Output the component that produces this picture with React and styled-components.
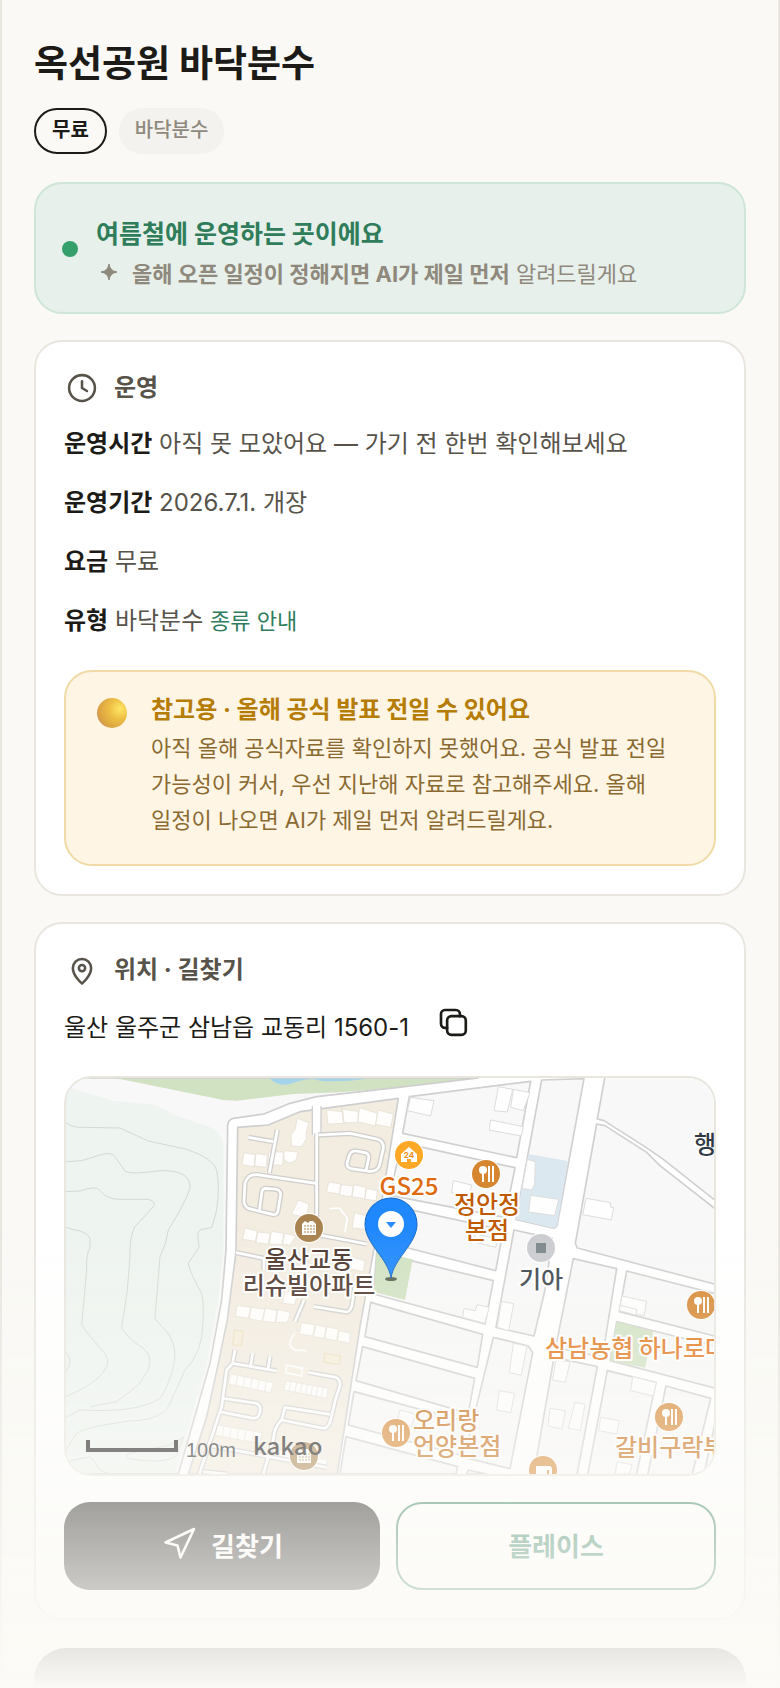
import React from "react";
import styled, { createGlobalStyle } from "styled-components";

const GlobalStyle = createGlobalStyle`
  * {
    box-sizing: border-box;
  }
  body {
    margin: 0;
    background: #faf9f5;
    color: #1c1b18;
    font-family: Inter, "Noto Sans CJK KR", sans-serif;
    word-break: keep-all;
  }
`;

const Page = styled.div`
  height: 100vh;
  overflow: hidden;
  padding: 36px 32px;
  border: solid #e8e6df;
  border-width: 0 2px;
  background: #faf9f5;
`;

const Title = styled.h1`
  margin: 0 0 16px;
  font-size: 37px;
  line-height: 56px;
  font-weight: 700;
`;

const Chips = styled.div`
  display: flex;
  gap: 12px;
`;

const Chip = styled.span`
  height: 46px;
  padding: ${(props) => (props.$active ? "4px 16px" : "4px 14px")};
  border: 2px solid ${(props) => (props.$active ? "#1c1b18" : "#f3f2ee")};
  border-radius: 23px;
  background: ${(props) => (props.$active ? "#faf9f5" : "#f3f2ee")};
  color: ${(props) => (props.$active ? "#1c1b18" : "#8f897d")};
  font-size: 20px;
  line-height: 32px;
  font-weight: ${(props) => (props.$active ? 700 : 500)};
`;

const Status = styled.section`
  display: flex;
  align-items: center;
  gap: 18px;
  margin-top: 28px;
  padding: 20px 24px 18px;
  border: 2px solid #cfe5d8;
  border-radius: 28px;
  background: #e7f0ea;
`;

const Dot = styled.span`
  flex: none;
  width: 16px;
  height: 16px;
  margin-left: 2px;
  border-radius: 50%;
  background: #35a06c;
`;

const StatusBody = styled.div`
  padding-top: 10px;
`;

const StatusTitle = styled.h2`
  margin: 0;
  color: #2f7d5b;
  font-size: 25px;
  line-height: 40px;
  font-weight: 700;
`;

const StatusNote = styled.p`
  display: flex;
  align-items: center;
  gap: 10px;
  margin: 0;
  color: #8f897d;
  font-size: 22px;
  line-height: 40px;

  svg {
    flex: none;
    margin-bottom: 4px;
  }
`;

const Card = styled.section`
  margin-top: 26px;
  padding: 28px;
  border: 2px solid #e8e6df;
  border-radius: 28px;
  background: #fff;
`;

const CardHeader = styled.header`
  display: flex;
  align-items: center;
  gap: 14px;
  height: 36px;
  margin-bottom: 18px;
  color: #57534a;
`;

const CardTitle = styled.h2`
  margin: 0;
  font-size: 24px;
  line-height: 34px;
  font-weight: 700;
`;

const InfoList = styled.div`
  display: flex;
  flex-direction: column;
  gap: 20px;
`;

const InfoRow = styled.div`
  color: #57534a;
  font-size: 24px;
  line-height: 39px;

  strong {
    color: #1c1b18;
    font-weight: 700;
  }
`;

const GuideLink = styled.a`
  color: #2f7d5b;
  font-size: 22px;
  line-height: 1;
  text-decoration: none;
`;

const Notice = styled.div`
  display: flex;
  align-items: flex-start;
  gap: 24px;
  margin-top: 30px;
  padding: 22px 24px 26px 31px;
  border: 2px solid #f0dba6;
  border-radius: 28px;
  background: #fff5e5;

  svg {
    flex: none;
    margin-top: 4px;
  }
`;

const NoticeTitle = styled.h3`
  margin: 0 0 4px;
  color: #b57c06;
  font-size: 24px;
  line-height: 32px;
  font-weight: 700;
`;

const NoticeText = styled.p`
  margin: 0;
  color: #8a6a30;
  font-size: 22px;
  line-height: 36px;
`;

const Address = styled.div`
  display: flex;
  align-items: center;
  gap: 28px;
  margin-bottom: 26px;
  font-size: 24px;
  line-height: 44px;
`;

const CopyButton = styled.button`
  display: flex;
  padding: 0 0 12px;
  border: 0;
  background: none;
  color: #1c1b18;
`;

const MapFrame = styled.div`
  height: 400px;
  overflow: hidden;
  border: 2px solid #e8e6df;
  border-radius: 28px;

  svg {
    display: block;
    width: 100%;
    height: 100%;
  }
`;

const MapText = styled.text`
  fill: ${(props) => props.$color};
  stroke: #fff;
  stroke-width: 4px;
  stroke-linejoin: round;
  paint-order: stroke;
  font-family: "Noto Sans CJK KR", sans-serif;
  font-size: 24px;
  font-weight: 500;
`;

const Logo = styled.text`
  fill: #111;
  font-family: "Noto Sans CJK KR", sans-serif;
  font-size: 24px;
  font-weight: 500;
`;

const ScaleText = styled.text`
  fill: #222;
  font-family: "Liberation Sans", sans-serif;
  font-size: 20px;
`;

const Actions = styled.div`
  display: flex;
  gap: 16px;
  margin-top: 26px;
`;

const Action = styled.button`
  display: flex;
  flex: 1;
  align-items: center;
  justify-content: center;
  gap: 14px;
  height: 88px;
  padding: 0 0 4px;
  border: ${(props) => (props.$outline ? "2px solid #2f7d5b" : "0")};
  border-radius: 26px;
  background: ${(props) => (props.$outline ? "#fff" : "#1c1b18")};
  color: ${(props) => (props.$outline ? "#2f7d5b" : "#fff")};
  font-family: inherit;
  font-size: 26px;
  font-weight: 700;
`;

const DarkCard = styled.section`
  height: 240px;
  margin-top: 28px;
  border-radius: 32px;
  background: #1c1b18;
`;

const BottomFade = styled.div`
  position: fixed;
  right: 0;
  bottom: 0;
  left: 0;
  height: 464px;
  background: linear-gradient(rgba(251, 250, 246, 0), #fbfaf6);
  pointer-events: none;
`;

const Icon = ({ size = 36, stroke = 1.7, children }) => (
  <svg
    width={size}
    height={size}
    viewBox="0 0 24 24"
    fill="none"
    stroke="currentColor"
    strokeWidth={stroke}
    strokeLinecap="round"
    strokeLinejoin="round"
    aria-hidden="true"
  >
    {children}
  </svg>
);

const northArea =
  "M18 24H1255L990 55 770 80 690 100 612 132 520 145Q505 148 503 165L498 540 485 690 450 880 355 1212H18Z";

const estate =
  "M533 172L625 165 720 125 1015 85 945 520 900 770 832 1212H385L440 1040 475 880 502 750 528 545Z";

const contours = [
  "M18 158Q40 174 70 172L180 174 265 213 380 238Q460 265 470 300Q480 350 470 420L456 472 420 480Q408 490 418 530L385 580Q390 610 425 670Q435 720 425 800Q415 860 375 900L330 1000Q310 1050 210 1053Q80 1070 50 1090L18 1140",
  "M18 275L65 272 130 252Q155 247 165 260L195 303Q210 315 300 302Q395 300 390 355Q375 400 325 480Q320 520 300 560L285 745Q295 760 325 790Q355 840 340 890Q325 950 300 985Q250 1020 130 1022L60 1020 18 1042",
  "M18 365L60 363Q110 345 120 362Q140 388 180 388L265 388Q290 395 280 410L225 470Q208 500 210 560L202 660 185 775Q215 815 250 835Q280 860 265 900L235 945 170 995 90 1010",
  "M18 472L45 480Q80 485 90 505V535Q78 550 80 600L65 765Q90 800 130 845Q150 870 140 890Q120 930 60 960L18 980",
  "M18 848Q42 870 18 905",
  "M370 1102L350 1155Q320 1185 200 1165 195 1150 220 1148L330 1125Z",
  "M18 1175L90 1160Q110 1180 120 1200L150 1212",
];

// coordinates are relative to the eastern half of the map
const blocks = [
  "58,80 422,34 380,263 38,190",
  "34,218 375,293 345,442 0,376",
  "55,418 340,480 317,602 20,525",
  "-40,547 310,632 285,762 -50,672",
  "372,480 487,505 465,660 432,798 318,772",
  "-58,697 278,793 262,892 -75,800",
  "-82,830 254,925 235,1030 -102,932",
  "-108,965 228,1055 208,1155 -125,1065",
  "-132,1100 203,1190 198,1212 -150,1212",
  "310,802 415,828 428,848 360,1196 222,1162",
  "235,1200 290,1212 230,1212",
  "550,566 680,596 637,862 497,832",
  "710,603 980,672 980,800 688,725",
  "620,162 645,167 770,247 810,287 980,420 980,644 562,534 556,520",
  "645,20 980,20 980,395 820,268 768,232 642,152 622,147",
  "680,755 980,830 980,956 660,872",
  "652,902 798,938 738,1220 592,1220",
  "828,948 962,985 905,1220 772,1220",
  "492,862 622,890 560,1220 430,1220",
  "975,1060 980,1220 940,1220",
];

const houses = [
  "62,82 132,92 122,138 52,122",
  "325,50 368,58 352,126 312,122",
  "370,58 420,68 400,122 362,112",
  "302,150 400,170 394,198 298,180",
  "190,332 245,345 238,378 185,368",
  "422,376 506,388 494,437 416,426",
  "412,268 436,275 434,345 424,360 396,355",
  "588,385 662,398 662,412 671,412 664,450 578,434",
  "695,678 770,694 762,738 690,720",
  "690,706 740,718 738,735 688,722",
  "334,694 371,701 356,782 322,772",
  "222,715 255,722 262,704 298,712 284,760 218,742",
  "370,820 411,828 394,916 358,908",
  "328,962 374,970 362,1028 320,1020",
  "498,870 540,875 526,937 488,930",
  "480,1015 526,1022 516,1077 474,1068",
  "555,996 585,1004 571,1082 535,1074 542,1048",
  "632,1042 688,1052 680,1092 626,1082",
  "728,920 799,938 790,978 722,962",
  "682,1176 726,1184 718,1212 675,1212",
  "255,492 322,506 318,532 252,516",
  "30,1020 75,1032 65,1070 20,1060",
];

const flats = [
  "800,120 845,125 845,112 850,160 804,162",
  "848,118 895,124 893,158 852,158",
  "898,113 952,130 946,168 894,155",
  "955,120 1000,132 992,172 947,163",
  "712,145 746,158 738,190 740,205 724,230 695,228 693,195 705,180",
  "552,248 586,254 582,290 546,284",
  "588,250 622,256 618,292 584,288",
  "626,246 670,246 668,286 624,284",
  "672,242 714,246 708,270 690,280 672,270",
  "806,336 842,342 838,372 800,366",
  "844,344 880,348 875,380 838,375",
  "882,344 918,352 914,386 876,380",
  "920,355 952,362 948,392 914,388",
  "715,390 746,402 742,432 726,440 695,432",
  "555,474 592,484 586,514 548,508",
  "594,486 630,490 625,522 588,518",
  "634,484 672,490 666,524 628,522",
  "674,490 708,498 690,526 668,522",
  "884,428 925,440 918,478 876,474",
  "870,560 915,572 910,606 866,595",
  "675,662 712,672 704,704 668,700",
  "532,706 572,712 565,745 526,738",
  "574,712 614,718 606,754 568,746",
  "616,714 652,722 644,758 608,754",
  "654,718 692,728 682,756 648,758",
  "724,758 766,764 758,798 718,792",
  "768,764 798,772 792,805 760,800",
  "800,770 836,778 830,812 795,806",
  "838,782 872,790 868,820 832,812",
  "512,912 640,938 632,968 506,942",
  "678,932 804,955 800,985 672,960",
  "472,1065 606,1088 598,1120 466,1096",
  "660,1140 802,1170 796,1200 655,1176",
];

const lanes = [
  "M770 190V495",
  "M775 195L870 190 950 207Q972 212 970 235L958 288Q950 306 928 304L872 296Q858 290 862 276L868 256Q873 242 888 243L915 248Q928 251 926 265L918 302",
  "M565 202L640 215M652 180L628 308",
  "M768 340L590 314Q565 312 555 338L552 395Q555 412 568 416L640 434Q652 434 654 422L662 372Q660 358 642 357L615 355Q606 356 605 370L598 422",
  "M528 548L612 565V600",
  "M740 488L920 522",
  "M762 710L860 726Q872 724 876 705L886 640",
  "M705 755L732 690",
  "M525 840L518 880 500 900 485 1010 418 1212",
  "M518 880L650 903M578 850L572 888M630 858L624 896",
  "M745 907L828 922Q842 930 840 947L826 990 812 1050Q806 1075 790 1075L665 1050Q642 1070 640 1110L610 1212",
  "M665 1050L675 1012 810 1033",
  "M490 985L590 1000Q604 1008 600 1025 596 1045 580 1045L478 1025",
  "M455 1128L800 1192M430 1205L500 1212",
];

const Badge = ({ x, y, color = "#d68630", children }) => (
  <g transform={`translate(${x} ${y})`}>
    <circle r="15" fill="#fff" />
    <circle r="14" fill={color} />
    {children}
  </g>
);

const Food = (props) => (
  <Badge {...props}>
    <circle cx="-3" cy="-4" r="4" fill="#fff" />
    <path d="M-3-1V8M3-8V8M7-8V8" stroke="#fff" strokeWidth="2" />
  </Badge>
);

const Apartment = (props) => (
  <Badge {...props} color="#a9834f">
    <path d="M-7 7V-4l3-3 3 2 2-2 3 0 3 3V7z" fill="#fff" />
    <path
      d="M-5-2H6M-5 1H6M-5 4H6"
      stroke="#a9834f"
      strokeDasharray="2 1"
      strokeWidth="1"
    />
  </Badge>
);

const PlaceMap = () => (
  <svg
    viewBox="0 0 648 396"
    preserveAspectRatio="xMidYMid slice"
    role="img"
    aria-label="옥선공원 바닥분수 지도"
  >
    <defs>
      <clipPath id="north">
        <path d={northArea} />
      </clipPath>
    </defs>
    <rect width="648" height="396" fill="#fff" />
    <g transform="translate(-6 -8) scale(0.33333)" strokeLinejoin="round">
      <path d={northArea} fill="#f8f8f8" />
      <g clipPath="url(#north)">
        <path
          d="M0 45L160 92 285 105 350 137 440 167Q485 185 490 220V540L475 690 440 880 345 1212H0Z"
          fill="#eef4f0"
        />
        <path
          d="M165 24L490 90 530 92 700 72 840 67 990 55H1255V24Z"
          fill="#d1e2c2"
        />
        <path d="M628 24Q652 50 690 42 745 20 780 32 850 38 930 24Z" fill="#a3d4ec" />
      </g>
      <path d={northArea} fill="none" stroke="#cfcfcf" strokeWidth="5" />
      <path d="M18 60V1224" stroke="#eef4f0" strokeWidth="8" />
      <g fill="none" stroke="#d4d9d1" strokeWidth="3">
        {contours.map((d) => (
          <path key={d} d={d} />
        ))}
      </g>

      <path d={estate} fill="#f3ece1" stroke="#cfcfcf" strokeWidth="5" />
      <path d="M770 108V195" stroke="#cfcfcf" strokeWidth="30" />
      <path d="M770 90V196" stroke="#fff" strokeWidth="22" />
      <g fill="#fffefc" stroke="#e3ddd2" strokeWidth="2">
        {flats.map((points) => (
          <polygon key={points} points={points} />
        ))}
      </g>
      <g stroke="#e3ddd2" strokeWidth="2">
        <path d="M533 917l-6 30M555 920l-6 30M577 925l-6 30M598 929l-6 30M619 934l-6 30" />
        <path d="M693 935l-6 30M710 938l-6 30M726 941l-6 30M742 944l-6 30M758 947l-6 30M774 950l-6 30M790 953l-6 30" />
        <path d="M492 1070l-6 30M514 1074l-6 30M536 1077l-6 30M558 1080l-6 30M582 1084l-6 30" />
      </g>
      <g fill="none">
        {lanes.map((d) => (
          <path key={d} d={d} stroke="#d0cfcd" strokeWidth="16" />
        ))}
        {lanes.map((d) => (
          <path key={d} d={d} stroke="#fff" strokeWidth="8" />
        ))}
        <path
          d="M808 416L838 414 862 445 855 486M705 790Q675 825 705 840L740 842M680 885L728 895 724 918 678 908Z"
          stroke="#fff"
          strokeWidth="5"
        />
        <path
          d="M524 780L550 785 544 828 518 824ZM795 850L842 858 838 884 790 876Z"
          fill="#f4edd8"
          stroke="#ece0c0"
          strokeWidth="4"
        />
      </g>

      <g transform="translate(990 0)">
        <g fill="#f8f8f8" stroke="#d0d0d0" strokeWidth="5">
          <path d="M455 30L582 26 502 462Q498 477 484 473L378 448Z" />
          {blocks.map((points) => (
            <polygon key={points} points={points} />
          ))}
        </g>
        <path d="M415 252L534 273 502 462Q498 477 484 473L378 448Z" fill="#dce8f0" />
        <path d="M-40 545L68 568 45 690-48 666Z" fill="#d1e2c2" />
        <path d="M680 755L790 785 765 893 660 872Z" fill="#d1e2c2" />
        <g fill="#fefefe" stroke="#dcdcdc" strokeWidth="3">
          {houses.map((points) => (
            <polygon key={points} points={points} />
          ))}
        </g>
      </g>
    </g>

    <Badge x={343} y={77} color="#ffa726">
      <path d="M-8-1L0-8 8-1V7H2V4H-2V7H-8Z" fill="#fff" />
      <text y="3" textAnchor="middle" fontSize="8" fontWeight="700" fill="#f09010">
        24
      </text>
    </Badge>
    <Food x={420} y={96} />
    <Apartment x={243} y={150} />
    <Badge x={475} y={170} color="#cbccd0">
      <rect x="-5" y="-5" width="10" height="10" fill="#7c878c" />
    </Badge>
    <Food x={635} y={227} />
    <Food x={330} y={355} />
    <Food x={603} y={339} />
    <Apartment x={238} y={378} />
    <Badge x={477} y={392}>
      <path d="M-7-4H6q3 0 3 3V6H6V0H4V6H-7Z" fill="#fff" />
    </Badge>

    <MapText x="343" y="117" textAnchor="middle" $color="#e06a10">
      GS25
    </MapText>
    <MapText x="421" y="135" textAnchor="middle" $color="#c05a00">
      <tspan>정안정</tspan>
      <tspan x="421" y="161">본점</tspan>
    </MapText>
    <MapText x="243" y="190" textAnchor="middle" $color="#4c352b">
      <tspan>울산교동</tspan>
      <tspan x="243" y="216">리슈빌아파트</tspan>
    </MapText>
    <MapText x="475" y="210" textAnchor="middle" $color="#3a444c">
      기아
    </MapText>
    <MapText x="628" y="75" $color="#2f3a44">
      행
    </MapText>
    <MapText x="479" y="279" $color="#e07416">
      삼남농협 하나로마트
    </MapText>
    <MapText x="347" y="351" $color="#c4690f">
      <tspan>오리랑</tspan>
      <tspan x="347" y="377">언양본점</tspan>
    </MapText>
    <MapText x="549" y="378" $color="#c4690f">
      갈비구락부
    </MapText>

    <ellipse cx="325" cy="201" rx="6" ry="2" fill="#54604f" />
    <path
      d="M325 200C322 180 299 166 299 146a26 26 0 0 1 52 0C351 166 328 180 325 200Z"
      fill="#1f88fd"
      stroke="#1767c4"
    />
    <circle cx="325" cy="146" r="13" fill="#fff" />
    <path d="M320 144H330L325 150Z" fill="#2a8dfc" />

    <path d="M22 362V372H110V362" fill="none" stroke="#111" strokeWidth="4" />
    <ScaleText x="120" y="379">100m</ScaleText>
    <Logo x="187" y="377">kakao</Logo>
  </svg>
);

const App = () => {
  return (
    <>
      <GlobalStyle />
      <Page>
        <Title>옥선공원 바닥분수</Title>
        <Chips>
          <Chip $active>무료</Chip>
          <Chip>바닥분수</Chip>
        </Chips>

        <Status>
          <Dot />
          <StatusBody>
            <StatusTitle>여름철에 운영하는 곳이에요</StatusTitle>
            <StatusNote>
              <svg width="26" height="26" viewBox="0 0 26 26" aria-hidden="true">
                <path
                  d="M13 5Q14 12 21 13 14 14 13 21 12 14 5 13 12 12 13 5Z"
                  fill="currentColor"
                  stroke="currentColor"
                />
              </svg>
              <span>
                <b>올해 오픈 일정이 정해지면 AI가 제일 먼저</b> 알려드릴게요
              </span>
            </StatusNote>
          </StatusBody>
        </Status>

        <Card>
          <CardHeader>
            <Icon>
              <circle cx="12" cy="12" r="8.6" />
              <path d="M12 7.5V12l3.3 2" />
            </Icon>
            <CardTitle>운영</CardTitle>
          </CardHeader>
          <InfoList>
            <InfoRow>
              <strong>운영시간</strong> 아직 못 모았어요 — 가기 전 한번 확인해보세요
            </InfoRow>
            <InfoRow>
              <strong>운영기간</strong> 2026.7.1. 개장
            </InfoRow>
            <InfoRow>
              <strong>요금</strong> 무료
            </InfoRow>
            <InfoRow>
              <strong>유형</strong> 바닥분수 <GuideLink href="#types">종류 안내</GuideLink>
            </InfoRow>
          </InfoList>
          <Notice>
            <svg width="30" height="30" viewBox="0 0 30 30" aria-hidden="true">
              <defs>
                <radialGradient id="ball" cx="0.76" cy="0.36" r="0.85">
                  <stop offset="0" stopColor="#ffe766" />
                  <stop offset="0.4" stopColor="#eebf45" />
                  <stop offset="0.8" stopColor="#dba440" />
                  <stop offset="1" stopColor="#cf8e62" />
                </radialGradient>
              </defs>
              <circle cx="15" cy="15" r="15" fill="url(#ball)" />
            </svg>
            <div>
              <NoticeTitle>참고용 · 올해 공식 발표 전일 수 있어요</NoticeTitle>
              <NoticeText>
                아직 올해 공식자료를 확인하지 못했어요. 공식 발표 전일 가능성이
                커서, 우선 지난해 자료로 참고해주세요. 올해 일정이 나오면 AI가
                제일 먼저 알려드릴게요.
              </NoticeText>
            </div>
          </Notice>
        </Card>

        <Card>
          <CardHeader>
            <Icon>
              <path d="M12 21S5.9 16 5.9 10.7a6.1 6.1 0 0 1 12.2 0C18.1 16 12 21 12 21Z" />
              <circle cx="12" cy="10.7" r="2.1" />
            </Icon>
            <CardTitle>위치 · 길찾기</CardTitle>
          </CardHeader>
          <Address>
            <span>울산 울주군 삼남읍 교동리 1560-1</span>
            <CopyButton type="button" aria-label="주소 복사">
              <Icon size={32} stroke={2}>
                <rect x="7.6" y="7.6" width="14" height="14" rx="3.2" />
                <path d="M7.6 16.4H6a3 3 0 0 1-3-3V6a3 3 0 0 1 3-3h8.2a3 3 0 0 1 3 3v1.6" />
              </Icon>
            </CopyButton>
          </Address>
          <MapFrame>
            <PlaceMap />
          </MapFrame>
          <Actions>
            <Action type="button">
              <Icon>
                <path d="M3 11L22 2 13 21 11 13Z" />
              </Icon>
              길찾기
            </Action>
            <Action type="button" $outline>
              플레이스
            </Action>
          </Actions>
        </Card>

        <DarkCard />
      </Page>
      <BottomFade />
    </>
  );
};

export default App;
